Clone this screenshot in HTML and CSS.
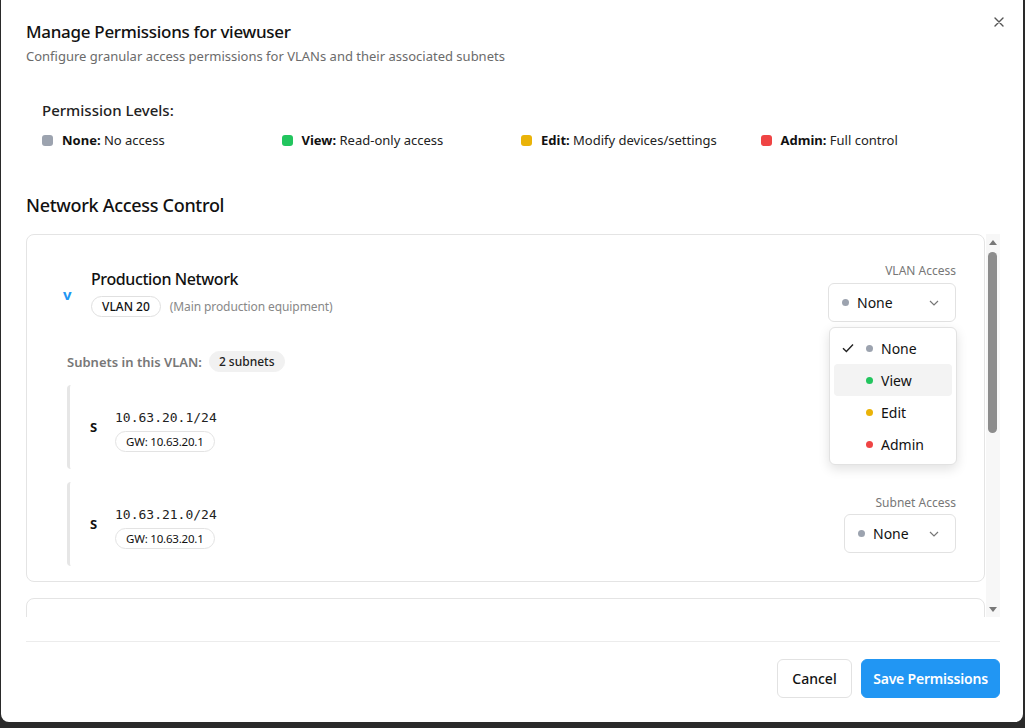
FILE: index.html
```html
<!DOCTYPE html>
<html lang="en">
<head>
<meta charset="utf-8">
<title>Manage Permissions</title>
<link rel="stylesheet" href="styles.css">
</head>
<body>
<div class="modal">
  <button class="close" aria-label="Close">
    <svg width="10" height="10" viewBox="0 0 10 10"><path d="M1 1l8 8M9 1l-8 8" stroke="#555" stroke-width="1.4" fill="none" stroke-linecap="round"/></svg>
  </button>
  <header class="modal-header">
    <h2 class="title">Manage Permissions for viewuser</h2>
    <p class="subtitle">Configure granular access permissions for VLANs and their associated subnets</p>
  </header>

  <section class="levels">
    <h3 class="levels-title">Permission Levels:</h3>
    <div class="legend">
      <div class="legend-item"><span class="sq gray"></span><b>None:</b>&nbsp;No access</div>
      <div class="legend-item"><span class="sq green"></span><b>View:</b>&nbsp;Read-only access</div>
      <div class="legend-item"><span class="sq yellow"></span><b>Edit:</b>&nbsp;Modify devices/settings</div>
      <div class="legend-item"><span class="sq red"></span><b>Admin:</b>&nbsp;Full control</div>
    </div>
  </section>

  <h3 class="section-title">Network Access Control</h3>

  <div class="scroll-wrap">
    <div class="scroll-content">
      <div class="card">
        <div class="vlan-head">
          <div class="vlan-left">
            <span class="caret">v</span>
            <div class="vlan-info">
              <div class="vlan-name">Production Network</div>
              <div class="vlan-meta"><span class="pill">VLAN 20</span><span class="desc">(Main production equipment)</span></div>
            </div>
          </div>
          <div class="access">
            <div class="access-label">VLAN Access</div>
            <div class="select-wrap">
              <div class="select wide"><span class="dot gray"></span><span class="sel-text">None</span>
                <svg class="chev" width="10" height="6" viewBox="0 0 10 6"><path d="M1 1l4 4 4-4" stroke="#777" stroke-width="1.2" fill="none"/></svg>
              </div>
              <div class="menu">
                <div class="menu-item"><span class="check"><svg width="12" height="10" viewBox="0 0 12 10"><path d="M1 5.2l3.4 3.4L11 1.6" stroke="#222" stroke-width="1.4" fill="none"/></svg></span><span class="dot gray"></span>None</div>
                <div class="menu-item active"><span class="check"></span><span class="dot green"></span>View</div>
                <div class="menu-item"><span class="check"></span><span class="dot yellow"></span>Edit</div>
                <div class="menu-item"><span class="check"></span><span class="dot red"></span>Admin</div>
              </div>
            </div>
          </div>
        </div>

        <div class="subnets-head"><span class="subnets-label">Subnets in this VLAN:</span><span class="pill soft">2 subnets</span></div>

        <div class="subnet-list">
          <div class="subnet">
            <div class="subnet-left">
              <span class="s-icon">S</span>
              <div class="subnet-info">
                <div class="ip">10.63.20.1/24</div>
                <span class="pill gw">GW: 10.63.20.1</span>
              </div>
            </div>
            <div class="access">
              <div class="access-label">Subnet Access</div>
              <div class="select narrow"><span class="dot gray"></span><span class="sel-text">None</span>
                <svg class="chev" width="10" height="6" viewBox="0 0 10 6"><path d="M1 1l4 4 4-4" stroke="#777" stroke-width="1.2" fill="none"/></svg>
              </div>
            </div>
          </div>
          <div class="subnet">
            <div class="subnet-left">
              <span class="s-icon">S</span>
              <div class="subnet-info">
                <div class="ip">10.63.21.0/24</div>
                <span class="pill gw">GW: 10.63.20.1</span>
              </div>
            </div>
            <div class="access">
              <div class="access-label">Subnet Access</div>
              <div class="select narrow"><span class="dot gray"></span><span class="sel-text">None</span>
                <svg class="chev" width="10" height="6" viewBox="0 0 10 6"><path d="M1 1l4 4 4-4" stroke="#777" stroke-width="1.2" fill="none"/></svg>
              </div>
            </div>
          </div>
        </div>
      </div>

      <div class="card card-next"></div>
    </div>

    <div class="scrollbar">
      <div class="sb-btn"><svg width="8" height="5" viewBox="0 0 8 5"><path d="M0 5L4 0L8 5Z" fill="#777"/></svg></div>
      <div class="sb-track"><div class="sb-thumb"></div></div>
      <div class="sb-btn"><svg width="8" height="5" viewBox="0 0 8 5"><path d="M0 0L4 5L8 0Z" fill="#777"/></svg></div>
    </div>
  </div>

  <footer class="modal-footer">
    <button class="btn btn-outline">Cancel</button>
    <button class="btn btn-primary">Save Permissions</button>
  </footer>
</div>
</body>
</html>
```

FILE: styles.css
```css
* { box-sizing: border-box; }

html, body {
  margin: 0;
  padding: 0;
  background: #2a2a2a;
  height: 728px;
  overflow: hidden;
}

body {
  font-family: "Segoe UI", "Noto Sans", "Open Sans", sans-serif;
  color: #111;
}

.modal {
  position: relative;
  margin-left: 1px;
  width: 1022px;
  height: 722px;
  background: #fff;
  border-radius: 0 0 8px 8px;
  padding: 20px 23px 0 25px;
  display: flex;
  flex-direction: column;
}

.close {
  position: absolute;
  top: 16px;
  right: 18px;
  width: 12px;
  height: 12px;
  padding: 0;
  border: 0;
  background: none;
  display: flex;
  align-items: center;
  justify-content: center;
}

.modal-header { height: 45px; }

.title {
  margin: 0;
  font-size: 17px;
  line-height: 24px;
  font-weight: 500;
  color: #111;
  letter-spacing: -0.3px;
}

.subtitle {
  margin: 3px 0 0;
  font-size: 13px;
  line-height: 18px;
  color: #6b6b6b;
}

.levels {
  margin-top: 19px;
  padding: 16px;
}

.levels-title {
  margin: 0;
  font-size: 15px;
  line-height: 20px;
  font-weight: 500;
  color: #222;
}

.legend {
  margin-top: 10px;
  display: grid;
  grid-template-columns: repeat(4, 1fr);
  gap: 16px;
}

.legend-item {
  display: flex;
  align-items: center;
  font-size: 13px;
  line-height: 20px;
  color: #222;
}

.legend-item b { font-weight: 700; color: #111; }

.sq {
  width: 11px;
  height: 11px;
  border-radius: 3px;
  margin-right: 9px;
  flex: none;
}

.gray { background: #9ca3af; }
.green { background: #22c55e; }
.yellow { background: #eab308; }
.red { background: #ef4444; }

.section-title {
  margin: 27px 0 0;
  font-size: 18px;
  line-height: 24px;
  font-weight: 500;
  color: #111;
  letter-spacing: -0.3px;
}

.scroll-wrap {
  margin-top: 17px;
  height: 383px;
  display: flex;
}

.scroll-content {
  flex: 1;
  overflow: hidden;
  display: flex;
  flex-direction: column;
  gap: 16px;
}

.card {
  flex: none;
  border: 1px solid #e4e4e4;
  border-radius: 8px;
  padding: 28px 28px 15px 40px;
}

.card-next { height: 348px; }

.vlan-head {
  display: flex;
  justify-content: space-between;
  align-items: center;
}

.vlan-left {
  display: flex;
  align-items: center;
  margin-left: -4px;
}

.caret {
  width: 16px;
  margin-right: 12px;
  margin-top: 3px;
  color: #2196f3;
  font-weight: 700;
  font-size: 15px;
  line-height: 16px;
}

.vlan-name {
  font-size: 16px;
  line-height: 22px;
  font-weight: 500;
  color: #111;
  letter-spacing: -0.4px;
}

.vlan-meta {
  margin-top: 6px;
  display: flex;
  align-items: center;
  gap: 9px;
}

.pill {
  display: inline-flex;
  align-items: center;
  height: 21px;
  padding: 0 10px;
  border: 1px solid #e0e0e0;
  border-radius: 11px;
  font-size: 12px;
  font-weight: 500;
  color: #111;
  background: #fff;
}

.pill.soft {
  background: #f1f1f1;
  border-color: #f1f1f1;
  color: #222;
  padding: 0 9px;
}

.pill.gw {
  font-weight: 400;
  font-size: 11.5px;
  letter-spacing: -0.2px;
  color: #111;
  border-color: #e3e3e3;
}

.desc {
  font-size: 12px;
  color: #888;
  letter-spacing: -0.1px;
}

.access {
  display: flex;
  flex-direction: column;
  align-items: flex-end;
}

.access-label {
  font-size: 12px;
  line-height: 16px;
  color: #777;
  margin-bottom: 4px;
}

.subnet .access-label { margin-bottom: 3px; }

.select-wrap { position: relative; }

.select {
  height: 39px;
  border: 1px solid #e2e2e2;
  border-radius: 6px;
  display: flex;
  align-items: center;
  padding: 0 16px 0 13px;
  font-size: 14px;
  color: #111;
  background: #fff;
}

.select.wide { width: 128px; }
.select.narrow { width: 112px; }

.dot {
  width: 7px;
  height: 7px;
  border-radius: 50%;
  flex: none;
  margin-right: 8px;
}

.sel-text { flex: 1; }

.chev { flex: none; }

.menu {
  position: absolute;
  top: calc(100% + 5px);
  left: 1px;
  width: 128px;
  background: #fff;
  border: 1px solid #e2e2e2;
  border-radius: 6px;
  padding: 4px;
  box-shadow: 0 4px 12px rgba(0, 0, 0, 0.12);
  z-index: 5;
}

.menu-item {
  height: 32px;
  display: flex;
  align-items: center;
  padding-left: 8px;
  font-size: 14px;
  color: #111;
  border-radius: 4px;
}

.menu-item.active { background: #f3f3f3; }

.check {
  width: 16px;
  margin-right: 8px;
  display: flex;
  align-items: center;
}

.menu-item .dot { margin-right: 8px; }

.subnets-head {
  margin-top: 29px;
  display: flex;
  align-items: center;
  gap: 7px;
}

.subnets-label {
  font-size: 13px;
  font-weight: 600;
  color: #777;
}

.subnet-list {
  margin-top: 13px;
  display: flex;
  flex-direction: column;
  gap: 13px;
}

.subnet {
  display: flex;
  justify-content: space-between;
  align-items: center;
  border-left: 3px solid #e6e6e6;
  border-radius: 4px;
  padding: 13px 0 13px 20px;
}

.subnet-left {
  display: flex;
  align-items: center;
}

.s-icon {
  width: 12px;
  margin-right: 13px;
  font-size: 13px;
  font-weight: 700;
  color: #111;
}

.subnet-info {
  display: flex;
  flex-direction: column;
  align-items: flex-start;
  margin-top: 6px;
}

.ip {
  font-family: "DejaVu Sans Mono", "Liberation Mono", monospace;
  font-size: 13px;
  line-height: 18px;
  color: #222;
  margin-bottom: 4px;
}

.scrollbar {
  width: 14px;
  margin-left: 1px;
  background: #f7f7f7;
  display: flex;
  flex-direction: column;
}

.sb-btn {
  height: 16px;
  display: flex;
  align-items: center;
  justify-content: center;
  padding-right: 1px;
}

.sb-track {
  flex: 1;
  padding: 2px 2px 0 2px;
}

.sb-thumb {
  width: 9px;
  height: 181px;
  border-radius: 5px;
  background: #8c8c8c;
}

.modal-footer {
  margin-top: 24px;
  border-top: 1px solid #ececec;
  padding-top: 17px;
  display: flex;
  justify-content: flex-end;
  gap: 9px;
}

.btn {
  height: 39px;
  border-radius: 6px;
  font-family: inherit;
  font-size: 14px;
  font-weight: 500;
  display: inline-flex;
  align-items: center;
  justify-content: center;
}

.btn-outline {
  width: 75px;
  background: #fff;
  border: 1px solid #e2e2e2;
  color: #111;
}

.btn-primary {
  width: 139px;
  background: #2196f3;
  border: 1px solid #2196f3;
  color: #fff;
  font-weight: 600;
  letter-spacing: -0.2px;
}
```
